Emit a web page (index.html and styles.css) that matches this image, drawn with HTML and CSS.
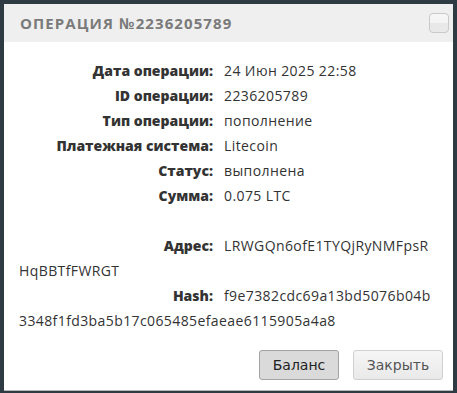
FILE: index.html
```html
<!DOCTYPE html>
<html lang="ru">
<head>
    <meta charset="UTF-8">
    <meta name="viewport" content="width=device-width, initial-scale=1.0">
    <title>Операция №2236205789</title>
    <link rel="stylesheet" href="styles.css">
</head>
<body>
    <div class="dialog">
        <div class="dialog-title">
            <span>Операция №2236205789</span>
            <button type="button" class="title-close" aria-label="Закрыть"></button>
        </div>
        <div class="dialog-content">
            <p><span class="label">Дата операции:</span>24 Июн 2025 22:58</p>
            <p><span class="label">ID операции:</span>2236205789</p>
            <p><span class="label">Тип операции:</span>пополнение</p>
            <p><span class="label">Платежная система:</span>Litecoin</p>
            <p><span class="label">Статус:</span>выполнена</p>
            <p><span class="label">Сумма:</span>0.075 LTC</p>
            <p>&nbsp;</p>
            <p><span class="label">Адрес:</span>LRWGQn6ofE1TYQjRyNMFpsRHqBBTfFWRGT</p>
            <p><span class="label">Hash:</span>f9e7382cdc69a13bd5076b04b3348f1fd3ba5b17c065485efaeae6115905a4a8</p>
        </div>
        <div class="dialog-buttons">
            <button type="button" class="btn btn-active">Баланс</button>
            <button type="button" class="btn btn-close">Закрыть</button>
        </div>
    </div>
</body>
</html>
```

FILE: styles.css
```css
body {
    margin: 0;
    padding: 4px 4px 0 4px;
    background-color: #2e3b42;
    font-family: "Open Sans", sans-serif;
}
.dialog {
    background: #fff;
    height: 387px;
    display: flex;
    flex-direction: column;
    border-bottom: 1px solid #b8b8b8;
    box-sizing: border-box;
}
.dialog-title {
    height: 38px;
    background-color: #efefef;
    display: flex;
    justify-content: space-between;
    align-items: center;
    padding: 0 4px 0 16px;
    color: #7a7a7a;
    font-size: 15px;
    font-weight: 700;
    letter-spacing: 1.1px;
    text-transform: uppercase;
}
.title-close {
    width: 20px;
    height: 20px;
    border: 1px solid #c9c9c9;
    border-radius: 4px;
    background: linear-gradient(#f7f7f7 0%, #f3f3f3 50%, #e8e8e8 50%, #e9e9e9 100%);
    padding: 0;
}
.dialog-content {
    padding: 16px 18px 0 15px;
    color: #333;
    font-size: 14px;
    line-height: 25px;
    letter-spacing: 0.4px;
    word-break: break-all;
}
.dialog-content p {
    margin: 0;
}
.label {
    display: inline-block;
    width: 194px;
    margin-right: 11px;
    text-align: right;
    font-weight: 800;
    letter-spacing: 0;
    word-break: normal;
}
.dialog-buttons {
    margin-top: auto;
    padding: 0 10px 10px 0;
    display: flex;
    justify-content: flex-end;
    gap: 14px;
}
.btn {
    width: 90px;
    height: 30px;
    padding: 0;
    font-family: "DejaVu Sans", sans-serif;
    font-size: 14px;
    color: #555;
    border: 1px solid #d0d0d0;
    border-radius: 3px;
    background: linear-gradient(#f6f6f6, #e9e9e9);
}
.btn-active {
    width: 80px;
    color: #222;
    border-color: #a3a3a3;
    background: #dadada;
}
```
